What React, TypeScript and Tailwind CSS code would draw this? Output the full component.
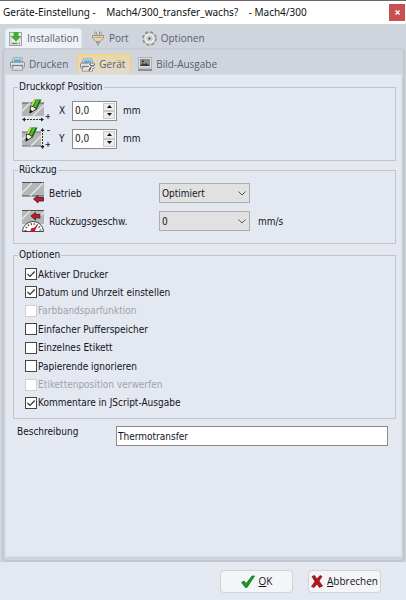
import React, { useState } from "react";
import clsx from "clsx";

const OPTIONS = [
  { id: "active", label: "Aktiver Drucker", checked: true },
  { id: "datetime", label: "Datum und Uhrzeit einstellen", checked: true },
  { id: "ribbon", label: "Farbbandsparfunktion", disabled: true },
  { id: "buffer", label: "Einfacher Pufferspeicher" },
  { id: "single", label: "Einzelnes Etikett" },
  { id: "paperend", label: "Papierende ignorieren" },
  { id: "discard", label: "Etikettenposition verwerfen", disabled: true },
  { id: "comments", label: "Kommentare in JScript-Ausgabe", checked: true },
];

const InstallIcon = () => (
  <svg width="14" height="16" viewBox="0 0 14 16" className="shrink-0">
    <rect x=".5" y="1.5" width="12" height="13" fill="#ececea" stroke="#a3a3a3" />
    <path d="M2 3v10M11 5v6" stroke="#cfcfcf" />
    <path d="M2 11h9v3H2z" fill="#d0d0d0" />
    <path d="M3 12.500h5M10 12.500h1" stroke="#777" />
    <path d="M4.500 1h5v4h3L7 10.500 1.500 5h3z" fill="#43ad2c" />
  </svg>
);

const PortIcon = () => (
  <svg width="14" height="15" viewBox="0 0 14 15" className="shrink-0">
    <path d="M4 4.500V1h1.500v3.500M8.500 4.500V1H10v3.500" fill="#f3f3f3" stroke="#9a9a9a" />
    <path d="M1.500 4.500h11V7L9 10.500H5L1.500 7z" fill="#ead6a8" stroke="#9c9687" />
    <path d="M3 6.500h8" stroke="#c4a763" />
    <path d="M5.500 10.500h3V12h-3zM7 12v3" fill="#ddd" stroke="#8f8f8f" />
  </svg>
);

const GearIcon = () => (
  <svg width="15" height="15" viewBox="0 0 16 16" className="shrink-0">
    <circle cx="8" cy="8" r="6.700" fill="none" stroke="#8a8a8a" strokeWidth="2.200" strokeDasharray="3 2.260" />
    <circle cx="8" cy="8" r="6" fill="#f1f1f1" stroke="#a2a2a2" strokeWidth=".8" />
    <circle cx="8" cy="8" r="3" fill="#e2e2e2" stroke="#b5b5b5" />
    <circle cx="8" cy="8" r="1.300" fill="#555" />
  </svg>
);

const PrinterIcon = ({ wrench }: { wrench?: boolean }) => (
  <svg width="15" height="14" viewBox="0 0 16 14" className="shrink-0">
    <path d="M3.500.5h9L13.500 5h-11z" fill="#f4f7fa" stroke="#8c9299" />
    <path d="M4.500 2h7l.8 3H3.700z" fill="#4db5e6" />
    <rect x=".5" y="5" width="15" height="5.500" rx="1" fill="#dfe1e3" stroke="#83878c" />
    <path d="M2 8.500h12" stroke="#606469" />
    <path d="M3.500 9h9l1 4.500h-11z" fill="#fff" stroke="#85898e" />
    <path d="M4.500 11.500h7" stroke="#b5b5b5" />
    {wrench && (
      <>
        <path d="M12.500 8L9.500 12.500" stroke="#f5f5f5" strokeWidth="4" />
        <path d="M12.500 8L9.500 13" stroke="#55585c" strokeWidth="1.800" />
        <path d="M11 4.500c-.8 1.500-.3 3 1.500 3.500 1.500.5 2.700-.3 3-1.800" fill="none" stroke="#f5f5f5" strokeWidth="3" />
        <path d="M11 4.500c-.8 1.500-.3 3 1.500 3.500 1.500.5 2.700-.3 3-1.800" fill="none" stroke="#55585c" strokeWidth="1.300" />
      </>
    )}
  </svg>
);

const ImageIcon = () => (
  <svg width="14" height="14" viewBox="0 0 14 14" className="shrink-0">
    <rect x=".5" y=".5" width="13" height="10.500" fill="#dcdcdc" stroke="#b5b5b5" />
    <rect x="2" y="2" width="10" height="7" fill="#8a8a8a" />
    <path d="M2 9L4.500 6l2 1.200L8 6l4 3z" fill="#3b3b3b" />
    <path d="M4 3.500h2v1.500H4z" fill="#333" />
    <path d="M0 13h14" stroke="#777" strokeWidth="1.500" />
  </svg>
);

const Pencil = () => (
  <>
    <path d="M12 .5h7.500L15 10l-5.500 3-1-6z" fill="#1c6b1d" />
    <path d="M12 .5h2L10.500 7.500l-2-.5z" fill="#d6dc4b" />
    <path d="M15 .5h2.500l-4 8.500-2-1z" fill="#4fc435" />
    <path d="M8.500 7l3 .7 3 2.300-6.500 4z" fill="#f5efe6" stroke="#222" strokeWidth=".8" />
    <path d="M8.200 10.500l2.500 2-3.200 2z" fill="#111" />
  </>
);

const HorizontalIcon = () => (
  <svg width="28" height="23" viewBox="0 0 28 23" className="shrink-0">
    <path d="M0 4h22v13H0z" fill="#b4b5b6" />
    <path d="M0 4h22" stroke="#505050" />
    <path d="M0 12l8-8M11 17L22 6" stroke="#e6e6e6" strokeWidth="1.500" />
    <Pencil />
    <path d="M2 20.500h18" stroke="#333" strokeDasharray="2 1" />
    <path d="M3 18.500v4L0 20.500zM19 18.500v4l3-2z" fill="#222" />
    <path d="M23.500 17.500h5M26 15v5" stroke="#333b50" />
  </svg>
);

const VerticalIcon = () => (
  <svg width="28" height="23" viewBox="0 0 28 23" className="shrink-0">
    <path d="M0 5h19v14H0z" fill="#b4b5b6" />
    <path d="M0 5h19M0 19h22" stroke="#707070" />
    <path d="M0 13l8-8M9 19l10-10" stroke="#e6e6e6" strokeWidth="1.500" />
    <g transform="translate(-4 0)">
      <Pencil />
    </g>
    <path d="M20.500 3v17" stroke="#333" strokeDasharray="2 1" />
    <path d="M18.500 4h4l-2-3zM18.500 19h4l-2 3z" fill="#222" />
    <path d="M25 3.500h3M23.500 17.500h5M26 15v5" stroke="#333b50" />
  </svg>
);

const RetractIcon = () => (
  <svg width="22" height="22" viewBox="0 0 22 22" className="shrink-0">
    <path d="M0 1h22v13H0z" fill="#b4b5b6" />
    <path d="M0 .5h22M0 14h22" stroke="#505050" />
    <path d="M0 11L10 1M8 14L21 1" stroke="#e6e6e6" strokeWidth="1.500" />
    <path d="M11.500 17l4.500-3.500v2h5.500v3.500H16v2z" fill="#c5162e" stroke="#43242a" strokeWidth=".9" />
  </svg>
);

const SpeedIcon = () => (
  <svg width="22" height="22" viewBox="0 0 22 22" className="shrink-0">
    <path d="M0 1h22v13H0z" fill="#b4b5b6" />
    <path d="M0 .5h22" stroke="#505050" />
    <path d="M0 9l8-8M15 9l7-7" stroke="#e6e6e6" strokeWidth="1.500" />
    <path d="M9 6l4.500-3.500v2H18V8h-4.500v2z" fill="#c5162e" stroke="#43242a" strokeWidth=".9" />
    <path d="M.5 21.500a10.500 10 0 0 1 21 0z" fill="#fff" stroke="#444" />
    <path d="M3.500 21a7.500 7 0 0 1 15 0" fill="none" stroke="#333" strokeWidth="2" strokeDasharray="1 2" />
    <path d="M9 20l7-5.500-3.500 7z" fill="#d3122b" />
    <circle cx="10.500" cy="20" r="2" fill="#d3122b" />
  </svg>
);

const CheckIcon = () => (
  <svg width="14" height="13" viewBox="0 0 14 13" className="shrink-0">
    <path d="M.5 7.500L3 6l2.200 2.500L11 1h2.500L6 12.500H4.500z" fill="#159a25" stroke="#0b6d18" strokeWidth=".7" />
  </svg>
);

const CrossIcon = () => (
  <svg width="12" height="13" viewBox="0 0 12 13" className="shrink-0">
    <path d="M1 1.500L3.500.5 6 4 9 .5l2 1-3 4.500 3.500 5-3 1.500L6 9l-3 3.500-2.500-1L4 6.500z" fill="#b5171d" stroke="#7c0d12" strokeWidth=".7" />
  </svg>
);

const Tab: React.FC<any> = ({ selected, className, icon, children }) => (
  <button
    type="button"
    role="tab"
    aria-selected={selected}
    className={clsx(
      "flex items-center gap-1 h-5 font-['Open_Sans','Noto_Sans',sans-serif] text-[10px] text-[#5a6072]",
      className
    )}
  >
    {icon}
    {children}
  </button>
);

const Group: React.FC<any> = ({ title, className, children }) => (
  <fieldset className={clsx("border border-[#c3c4c8] px-2", className)}>
    <legend className="-ml-1 px-px h-3.5 leading-[14px]">{title}</legend>
    {children}
  </fieldset>
);

const Spinner: React.FC<any> = ({ id, label, icon }) => {
  const [value, setValue] = useState(0);
  return (
    <div className="flex items-center h-[23px]">
      {icon}
      <label htmlFor={id} className="w-[22px] pl-[9px]">
        {label}
      </label>
      <div className="flex w-[45px] h-5 bg-white border border-[#8b8b8b] p-px">
        <input
          id={id}
          value={value.toFixed(1).replace(".", ",")}
          readOnly
          className="min-w-0 flex-1 pl-px outline-none"
        />
        <div className="flex flex-col w-3">
          <button
            type="button"
            aria-label={`${label} +`}
            onClick={() => setValue(value + 0.1)}
            className="flex flex-1 items-center justify-center bg-[#ececec] border border-[#c9c9c9]"
          >
            <svg width="5" height="3" viewBox="0 0 5 3">
              <path d="M0 3L2.500 0 5 3z" fill="#111" />
            </svg>
          </button>
          <button
            type="button"
            aria-label={`${label} -`}
            onClick={() => setValue(value - 0.1)}
            className="flex flex-1 items-center justify-center bg-[#ececec] border border-[#c9c9c9]"
          >
            <svg width="5" height="3" viewBox="0 0 5 3">
              <path d="M0 0h5L2.500 3z" fill="#111" />
            </svg>
          </button>
        </div>
      </div>
      <span className="pl-1.5">mm</span>
    </div>
  );
};

const Select: React.FC<any> = ({ id, label, icon, options, unit }) => (
  <div className="flex items-center h-[22px]">
    {icon}
    <label htmlFor={id} className="w-[115px] pl-[5px]">
      {label}
    </label>
    <div className="relative w-[91px] h-5">
      <select
        id={id}
        className="appearance-none w-full h-full pl-0.5 bg-[#e1e1e1] border border-[#adadad] outline-none"
      >
        {options.map((o: string) => (
          <option key={o}>{o}</option>
        ))}
      </select>
      <svg width="8" height="5" viewBox="0 0 8 5" className="absolute right-1 top-2 pointer-events-none">
        <path d="M.5.5L4 4 7.500.5" fill="none" stroke="#555" />
      </svg>
    </div>
    {unit && <span className="pl-2">{unit}</span>}
  </div>
);

const Option: React.FC<any> = ({ id, label, checked, disabled }) => {
  const [on, setOn] = useState(!!checked);
  return (
    <label
      htmlFor={id}
      className={clsx("flex items-center h-3.5 gap-px", disabled && "text-[#a2a3a8]")}
    >
      <span className="relative w-3 h-3">
        <input
          id={id}
          type="checkbox"
          checked={on}
          disabled={disabled}
          onChange={() => setOn(!on)}
          className="block appearance-none w-3 h-3 bg-white border border-[#444] disabled:border-[#cfcfcf]"
        />
        {on && (
          <svg width="12" height="12" viewBox="0 0 12 12" className="absolute inset-0 pointer-events-none">
            <path d="M2.500 6L5 8.500 9.700 3.500" fill="none" stroke="#333" strokeWidth="1.200" />
          </svg>
        )}
      </span>
      {label}
    </label>
  );
};

export default function App() {
  return (
    <div className="flex flex-col min-h-screen bg-[#e4e8f1] font-['DejaVu_Sans_Condensed','DejaVu_Sans',sans-serif] text-[10px] text-[#14141c]">
      <header className="flex items-center justify-between h-6 pl-[3px] pr-px border-t border-[#6b6570] bg-white font-['Noto_Sans','Open_Sans',sans-serif] text-[#111]">
        <h1 className="whitespace-pre">Geräte-Einstellung -    Mach4/300_transfer_wachs?    - Mach4/300</h1>
        <button
          type="button"
          aria-label="Schließen"
          className="flex items-center justify-center w-4 h-[17px] bg-[#c75050]"
        >
          <svg width="5" height="5" viewBox="0 0 5 5">
            <path d="M.5.5l4 4M4.500.5l-4 4" stroke="#fff" strokeWidth="1.300" />
          </svg>
        </button>
      </header>

      <main className="flex flex-col flex-1 bg-[#cfd4dd] pt-1 pl-0.5 pr-px">
        <div role="tablist" className="flex pl-[3px]">
          <Tab
            selected
            icon={<InstallIcon />}
            className="w-[77px] pl-[3px] rounded-t-sm border border-b-0 border-[#cdeef2] bg-[#eef1f5]"
          >
            Installation
          </Tab>
          <Tab icon={<PortIcon />} className="ml-[9px]">Port</Tab>
          <Tab icon={<GearIcon />} className="ml-[13px]">Optionen</Tab>
        </div>

        <div className="flex flex-col flex-1 rounded-sm border-2 border-[#c3c6cc] border-t-[#c8ccd4] pt-1 px-px pb-[3px]">
          <div role="tablist" className="flex">
            <Tab icon={<PrinterIcon />} className="ml-[5px]">Drucken</Tab>
            <Tab
              selected
              icon={<PrinterIcon wrench />}
              className="w-[54px] ml-[9px] pl-0.5 rounded-t-sm border border-b-0 border-[#fbcf6b] bg-linear-to-b from-[#ead7a8] to-[#e0dbce]"
            >
              Gerät
            </Tab>
            <Tab icon={<ImageIcon />} className="ml-[7px]">Bild-Ausgabe</Tab>
          </div>

          <div className="flex-1 bg-[#e4e8f1] border border-[#d9dde5] pt-[5px] pl-[7px] pr-[5px]">
            <Group title="Druckkopf Position">
              <div className="flex flex-col gap-[5px] pt-[5px] pb-2.5">
                <Spinner id="pos-x" label="X" icon={<HorizontalIcon />} />
                <Spinner id="pos-y" label="Y" icon={<VerticalIcon />} />
              </div>
            </Group>

            <Group title="Rückzug" className="mt-0.5">
              <div className="flex flex-col gap-1.5 pt-[5px] pb-[11px]">
                <Select id="mode" label="Betrieb" icon={<RetractIcon />} options={["Optimiert"]} />
                <Select id="speed" label="Rückzugsgeschw." icon={<SpeedIcon />} options={["0"]} unit="mm/s" />
              </div>
            </Group>

            <Group title="Optionen" className="mt-1">
              <div className="flex flex-col justify-between min-h-[156px] pt-[5px] pb-2 pl-[3px]">
                {OPTIONS.map((o) => (
                  <Option key={o.id} {...o} />
                ))}
              </div>
            </Group>

            <div className="flex pt-[7px] pl-1 pr-2">
              <label htmlFor="description" className="w-[99px] leading-3">
                Beschreibung
              </label>
              <input
                id="description"
                defaultValue="Thermotransfer"
                className="flex-1 min-w-0 h-5 px-px bg-white border border-[#8b8b8b] outline-none"
              />
            </div>
          </div>
        </div>
      </main>

      <footer className="flex justify-end gap-[15px] pt-2 pb-[7px] pr-[25px] font-['Open_Sans','Noto_Sans',sans-serif]">
        <button
          type="button"
          className="flex items-center justify-center gap-1 w-[73px] h-[23px] rounded-sm border border-[#d0d2d6] bg-[#f3f5f6]"
        >
          <CheckIcon />
          <span>
            <u>O</u>K
          </span>
        </button>
        <button
          type="button"
          className="flex items-center justify-center gap-1 w-[73px] h-[23px] rounded-sm border border-[#d0d2d6] bg-[#f3f5f6]"
        >
          <CrossIcon />
          <span>
            <u>A</u>bbrechen
          </span>
        </button>
      </footer>
    </div>
  );
}
